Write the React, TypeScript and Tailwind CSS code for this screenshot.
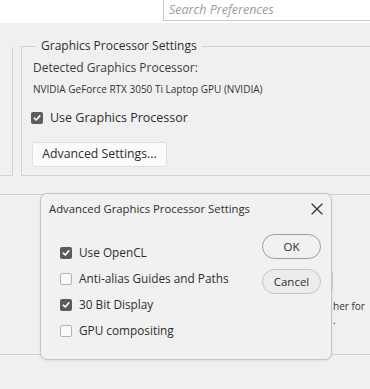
import { X } from 'lucide-react';

const font = "font-['Open_Sans',_'Liberation_Sans',_sans-serif]";

function Check({ on }: { on: boolean }) {
  return on ? (
    <span className="flex h-[12px] w-[12px] shrink-0 items-center justify-center rounded-[2px] bg-[#5b5b5b]">
      <svg width="8" height="8" viewBox="0 0 8 8" fill="none">
        <path d="M1.3 4.2 3.2 6 6.8 1.9" stroke="#fff" strokeWidth="1.6" strokeLinecap="round" strokeLinejoin="round" />
      </svg>
    </span>
  ) : (
    <span className="h-[12px] w-[12px] shrink-0 rounded-[2px] border border-[#b3b3b3] bg-[#fafafa]" />
  );
}

const OPTIONS = [
  { label: 'Use OpenCL', on: true },
  { label: 'Anti-alias Guides and Paths', on: false },
  { label: '30 Bit Display', on: true },
  { label: 'GPU compositing', on: false },
];

export default function App() {
  return (
    <div className={`relative h-[389px] w-[370px] overflow-hidden bg-[#f0f0f0] text-[#2e2e2e] ${font}`}>
      {/* header with search */}
      <div className="h-[23px] bg-white">
        <div className="ml-[163px] flex h-[21px] w-[260px] items-center border-b border-l border-[#c8c8c8] pl-[5px] text-[12.5px] italic text-[#9c9c9c]">
          Search Preferences
        </div>
      </div>

      {/* preference panels */}
      <div className="mt-[15px] flex items-start">
        <div className="mt-[9px] h-[129px] w-[13px] shrink-0 rounded-br-[2px] border-b border-r border-[#d2d2d2]" />
        <fieldset className="ml-[8px] w-[400px] shrink-0 border border-[#d2d2d2] px-[11px] pb-[8px]">
          <legend className="ml-[3px] px-[5px] text-[12px] leading-[16px]">Graphics Processor Settings</legend>
          <div className="mt-[5px] text-[12px] leading-[18px] text-[#3c3c3c]">Detected Graphics Processor:</div>
          <div className="mt-[5px] text-[10px] leading-[14px] text-[#333]">NVIDIA GeForce RTX 3050 Ti Laptop GPU (NVIDIA)</div>
          <div className="mt-[14px] flex h-[16px] items-center gap-[7px] -ml-[2px]">
            <Check on />
            <span className="text-[12.5px]">Use Graphics Processor</span>
          </div>
          <button className="-ml-[1px] mt-[16px] flex h-[25px] w-[135px] items-center justify-center rounded-[3px] border border-[#e0e0e0] bg-[#fbfbfb] text-[12.3px]">
            Advanced Settings...
          </button>
        </fieldset>
      </div>

      {/* panel behind the dialog */}
      <div className="mt-[18px] h-[161px] border-y border-[#d0d0d0] pt-[76px]">
        <div className="ml-[200px] flex items-start">
          <div className="h-[21px] w-[133px] rounded-[3px] border border-[#cfcfcf] bg-[#f7f7f7]" />
        </div>
        <div className="ml-[333px] mt-[7px] text-[10px] leading-[14px] text-[#333]">
          her for
          <br />.
        </div>
      </div>

      {/* dialog */}
      <div className="absolute left-[40px] top-[193px] h-[167px] w-[292px] rounded-[7px] border border-[#c4c4c4] bg-[#f1f1f1] shadow-[0_1px_3px_rgba(0,0,0,0.08)]">
        <div className="flex h-[16px] mt-[7px] items-center justify-between pl-[8px] pr-[4px]">
          <span className="text-[11.3px] leading-[16px]">Advanced Graphics Processor Settings</span>
          <X size={20} strokeWidth={1.4} className="text-[#333]" />
        </div>
        <div className="mt-[17px] flex items-start pr-[10px]">
          <div className="flex flex-col pl-[19px] pt-[6px]">
            {OPTIONS.map((o) => (
              <div key={o.label} className="flex h-[26px] items-center gap-[7px]">
                <Check on={o.on} />
                <span className="text-[11.8px]">{o.label}</span>
              </div>
            ))}
          </div>
          <div className="ml-auto flex flex-col gap-[10px]">
            <button className="flex h-[25px] w-[59px] items-center justify-center rounded-full border border-[#9d9d9d] bg-[#f1f1f1] text-[11.5px]">
              OK
            </button>
            <button className="flex h-[25px] w-[59px] items-center justify-center rounded-full border border-[#c4c4c4] bg-[#ececec] text-[11.5px]">
              Cancel
            </button>
          </div>
        </div>
      </div>
    </div>
  );
}
